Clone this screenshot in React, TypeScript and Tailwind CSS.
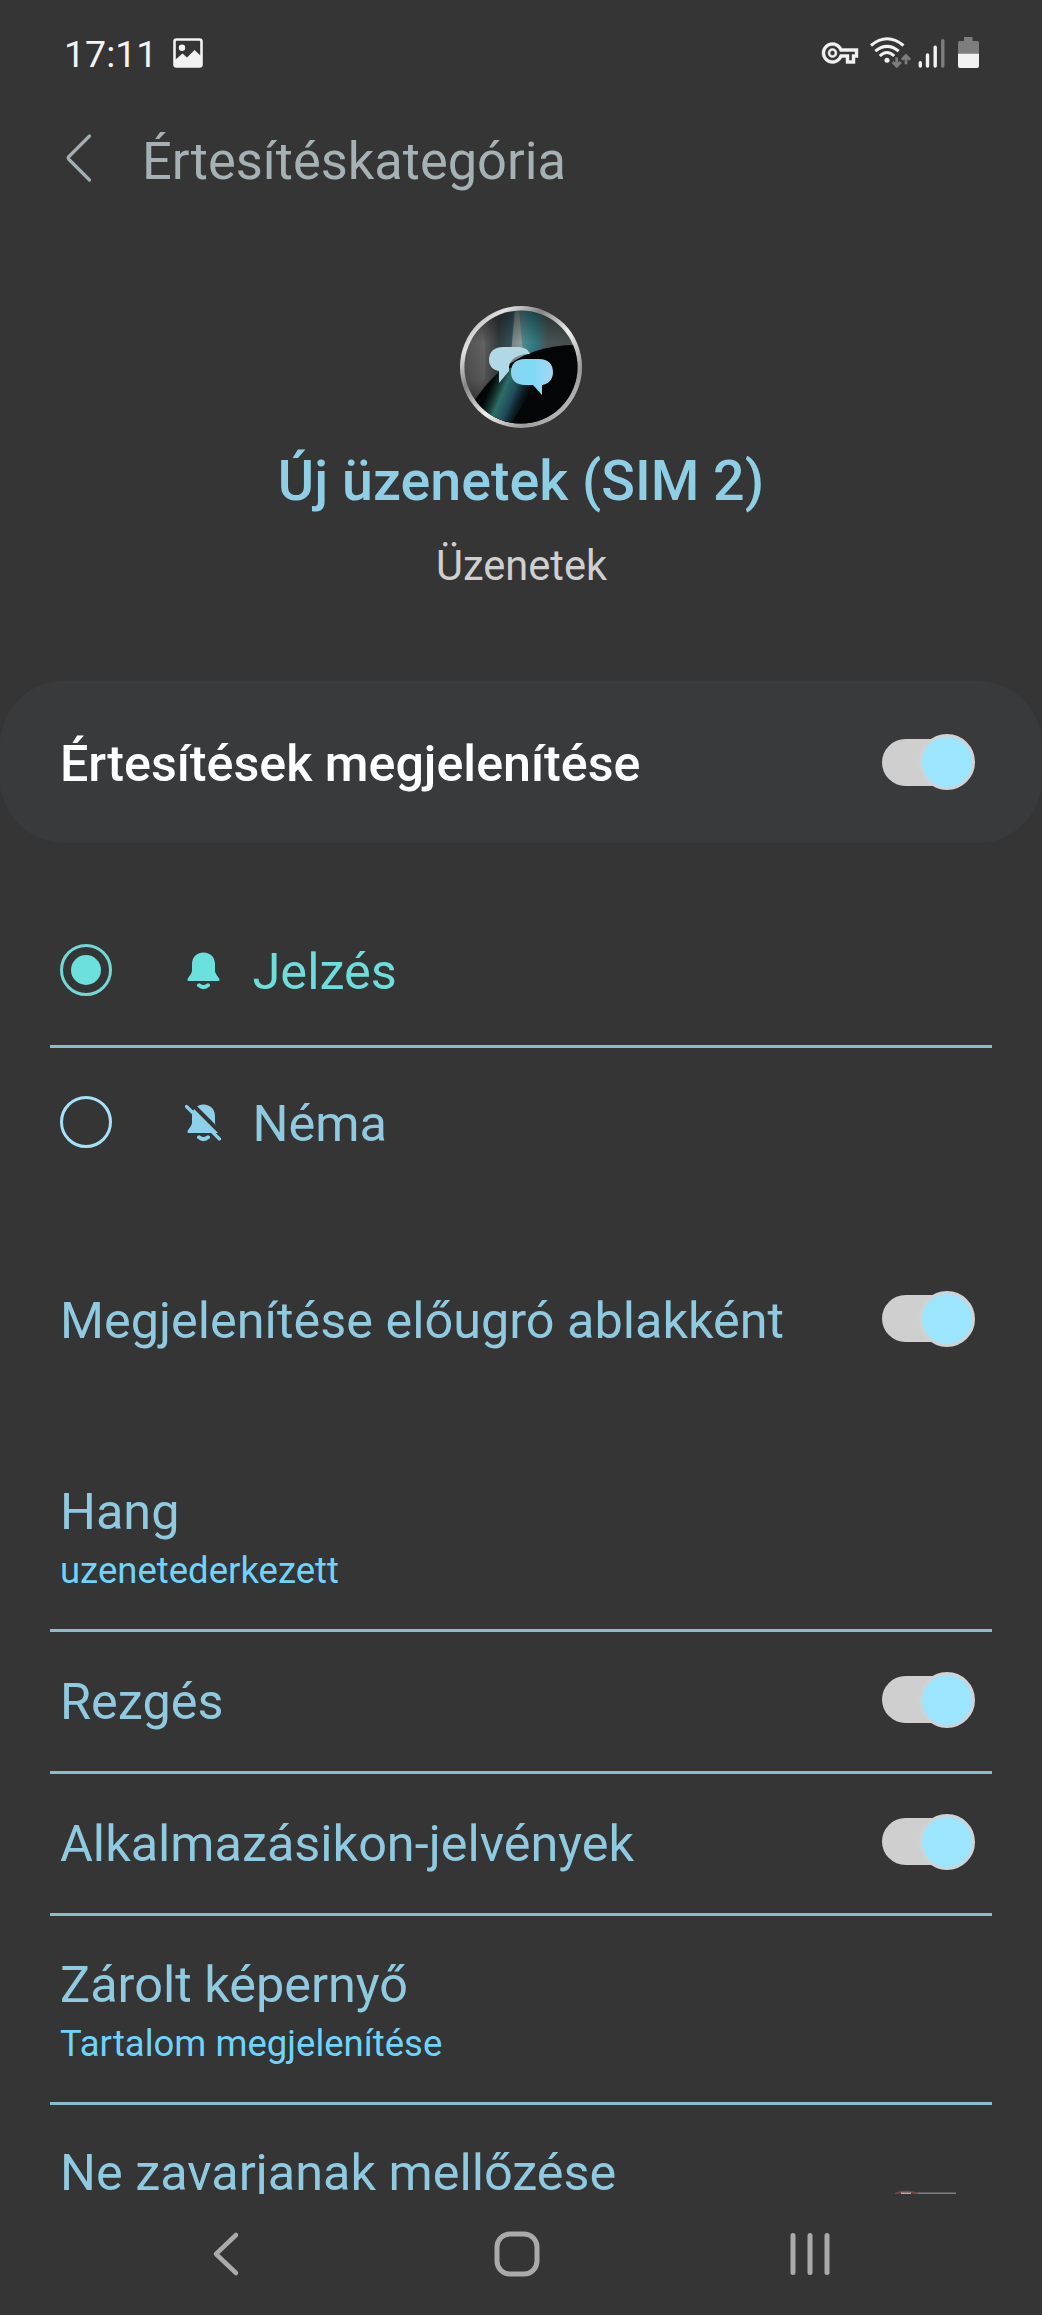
import clsx from "clsx"

interface ToggleProps {
  className?: string
}

function Toggle({ className }: ToggleProps) {
  return (
    <div className={clsx("flex h-14 w-[93px] shrink-0 items-center", className)}>
      <div className="flex h-[47px] w-[82px] items-center rounded-full bg-[#cfcfcf]">
        <div className="ml-[37px] size-14 shrink-0 rounded-full border-[3px] border-[#cfd3d5] bg-[#9be5ff]" />
      </div>
    </div>
  )
}

function Radio({ checked }: { checked?: boolean }) {
  return (
    <div
      className={clsx(
        "flex size-[52px] items-center justify-center rounded-full border-[3px]",
        checked ? "border-[#72d8d6]" : "border-[#a5e2fa]",
      )}
    >
      {checked && <div className="size-[30px] rounded-full bg-[#6ce0dc]" />}
    </div>
  )
}

function Divider() {
  return <div className="mx-[50px] h-[3px] bg-[#8bbccb]" />
}

function ImageIcon() {
  return (
    <svg width="30" height="30" viewBox="0 0 30 30" fill="none">
      <rect x="1.5" y="1.5" width="27" height="27" rx="2" stroke="#f2f2f2" strokeWidth="2.6" />
      <circle cx="9" cy="9.8" r="3.2" fill="#f2f2f2" />
      <path d="M2 22l7.5-6.5 4.5 4 7.5-7.5 7 6.5V28H2z" fill="#f2f2f2" />
    </svg>
  )
}

function StatusIcons() {
  return (
    <svg width="162" height="36" viewBox="0 0 162 36" fill="none">
      {/* VPN key */}
      <path
        transform="translate(3 -1) scale(1.5)"
        d="M22 19h-6v-4h-2.680c-1.140 2.420-3.600 4-6.320 4-3.860 0-7-3.140-7-7s3.140-7 7-7c2.720 0 5.170 1.580 6.320 4H24v6h-2v4zm-4-2h2v-4h2v-2H11.940l-.230-.670C11.010 8.340 9.110 7 7 7c-2.760 0-5 2.240-5 5s2.240 5 5 5c2.110 0 4.010-1.340 4.710-3.330l.230-.670H18v4zM7 15c-1.650 0-3-1.350-3-3s1.350-3 3-3 3 1.350 3 3-1.350 3-3 3zm0-4.600c-.900 0-1.600.700-1.600 1.600s.700 1.600 1.600 1.600 1.600-.700 1.600-1.600-.700-1.600-1.600-1.600z"
        fill="#f2f2f2"
        stroke="#f2f2f2"
        strokeWidth=".3"
      />
      {/* wifi */}
      <g stroke="#f2f2f2" strokeWidth="3">
        <path d="M52 9.500Q68 -4 84.500 9.500" />
        <path d="M56.300 15.200Q68 5.500 79.700 15.200" />
        <path d="M60.800 20Q68 13 75.200 20" />
      </g>
      <circle cx="68" cy="24.300" r="2.500" fill="#f2f2f2" />
      <g stroke="#7d7d7d" strokeWidth="2.800">
        <path d="M77.700 21.500V30M73.700 26l4 4.300 4-4.300" />
        <path d="M87 28.300V20M83 23.800l4-4.300 4 4.300" />
      </g>
      {/* signal */}
      <g strokeWidth="3.400" strokeLinecap="round" stroke="#f2f2f2">
        <path d="M101.300 26.700V30M108.500 19V30M116.200 11.300V30" />
        <path d="M123.800 4.700V30" stroke="#7d7d7d" />
      </g>
      {/* battery */}
      <path d="M145 1h8.500v4h5a1.500 1.500 0 0 1 1.500 1.500V18h-21V6.500a1.500 1.500 0 0 1 1.500-1.500h4.500z" fill="#7d7d7d" />
      <path d="M139 17.700h21v12.300a2 2 0 0 1-2 2h-17a2 2 0 0 1-2-2z" fill="#f2f2f2" />
    </svg>
  )
}

function BellIcon({ muted }: { muted?: boolean }) {
  return (
    <svg width="38" height="40" viewBox="0 0 38 40" fill="none">
      <path
        d="M18.500 2.500C11.500 2.500 7 7.500 7 14V20.500C7 24 3.500 26.500 2.500 29.500C2.300 30.500 3 31 4 31H33C34 31 34.700 30.500 34.500 29.500C33.500 26.500 30 24 30 20.500V14C30 7.500 25.500 2.500 18.500 2.500Z"
        fill="currentColor"
      />
      <path d="M14 35.300Q18.500 39 23 35.300" stroke="currentColor" strokeWidth="4" strokeLinecap="round" />
      {muted && (
        <>
          <path d="M5 0L38 33" stroke="#353535" strokeWidth="4" />
          <path d="M1.500 4.500L34.500 37" stroke="currentColor" strokeWidth="3.200" strokeLinecap="round" />
        </>
      )}
    </svg>
  )
}

function AppIcon() {
  return (
    <svg width="122" height="122" viewBox="0 0 122 122">
      <defs>
        <linearGradient id="rim" x1="0" y1="0" x2="1" y2="1">
          <stop offset="0" stopColor="#8b8b8b" />
          <stop offset=".2" stopColor="#e2e2e2" />
          <stop offset=".35" stopColor="#858585" />
          <stop offset=".55" stopColor="#f0f0f0" />
          <stop offset=".75" stopColor="#9a9a9a" />
          <stop offset="1" stopColor="#dddddd" />
        </linearGradient>
        <linearGradient id="sheen" x1="0" y1="0" x2="1" y2="0">
          <stop offset="0" stopColor="#3c3c3c" />
          <stop offset=".2" stopColor="#5a5a5a" />
          <stop offset=".32" stopColor="#333b3d" />
          <stop offset=".42" stopColor="#34525c" />
          <stop offset=".5" stopColor="#5a8890" />
          <stop offset=".6" stopColor="#2f7c84" />
          <stop offset=".72" stopColor="#465355" />
          <stop offset="1" stopColor="#4a4a4a" />
        </linearGradient>
        <linearGradient id="shade" x1="0" y1="0" x2="0" y2="1">
          <stop offset="0" stopColor="#000" stopOpacity=".5" />
          <stop offset=".3" stopColor="#000" stopOpacity="0" />
          <stop offset=".6" stopColor="#000" stopOpacity=".1" />
          <stop offset="1" stopColor="#000" stopOpacity=".8" />
        </linearGradient>
        <linearGradient id="beam" x1="28" y1="84" x2="66" y2="100" gradientUnits="userSpaceOnUse">
          <stop offset="0" stopColor="#1f5a50" stopOpacity="0" />
          <stop offset=".35" stopColor="#357f78" stopOpacity=".85" />
          <stop offset=".6" stopColor="#2c6c80" stopOpacity=".7" />
          <stop offset="1" stopColor="#14323f" stopOpacity="0" />
        </linearGradient>
        <linearGradient id="bubble" x1="0" y1="0" x2="1" y2="0">
          <stop offset="0" stopColor="#90d2ee" />
          <stop offset=".45" stopColor="#7bdcf6" />
          <stop offset="1" stopColor="#a3d6f2" />
        </linearGradient>
        <clipPath id="disc">
          <circle cx="61" cy="61" r="56.500" />
        </clipPath>
      </defs>
      <circle cx="61" cy="61" r="61" fill="url(#rim)" />
      <g clipPath="url(#disc)">
        <rect width="122" height="122" fill="url(#sheen)" />
        <path d="M20 14Q31 50 20 100L4 90V30Z" fill="#777" opacity=".3" />
        <path d="M55 4H59L64 60H50Z" fill="#a9a6a0" opacity=".6" />
        <rect width="122" height="122" fill="url(#shade)" />
        <path d="M12 98C34 66 62 37 122 39V122H20Z" fill="#030506" />
        <path d="M36 62H86L52 116L14 110Z" fill="url(#beam)" />
      </g>
      <path
        d="M43 41H57C64 41 68 43 70 48C59 48 50 52 49 61L49 65L39 77V65C33 64 29 60 29 54C29 46 34 41 43 41Z"
        fill="#b3d8e5"
      />
      <path
        d="M65 53H79C88 53 93 58 93 66C93 73 89 78 82 79V89L73 79H65C56 79 51 74 51 66C51 58 56 53 65 53Z"
        fill="url(#bubble)"
      />
    </svg>
  )
}

interface RowProps {
  title: string
  subtitle?: string
  toggle?: boolean
}

function SettingRow({ title, subtitle, toggle }: RowProps) {
  if (subtitle) {
    return (
      <div className="h-[186px] px-[60px] pt-[39px]">
        <div className="text-[50.4px] leading-[60px] text-[#8fcae0]">{title}</div>
        <div className="text-[36.5px] leading-[57px] text-[#6fd4fb]">{subtitle}</div>
      </div>
    )
  }
  return (
    <div className="flex h-[139px] items-center justify-between pr-[67.5px] pl-[60px]">
      <span className="text-[50.4px] leading-[60px] text-[#8fcae0]">{title}</span>
      {toggle && <Toggle className="mb-1" />}
    </div>
  )
}

function NavBar() {
  return (
    <div className="flex h-[121px] items-center justify-between pr-[211px] pb-[2px] pl-[212px]">
      <svg width="28" height="46" viewBox="0 0 28 46" fill="none">
        <path d="M24 4L4 23L24 42" stroke="#aaa" strokeWidth="4.500" strokeLinecap="round" strokeLinejoin="round" />
      </svg>
      <svg width="46" height="46" viewBox="0 0 46 46" fill="none" className="ml-1">
        <rect x="3" y="3" width="40" height="40" rx="13" stroke="#aaa" strokeWidth="5" />
      </svg>
      <svg width="42" height="46" viewBox="0 0 42 46">
        <path d="M4 4.500V41.500M21 4.500V41.500M38 4.500V41.500" stroke="#aaa" strokeWidth="5" strokeLinecap="round" />
      </svg>
    </div>
  )
}

export default function App() {
  return (
    <div className="flex h-[2315px] w-[1042px] flex-col overflow-hidden bg-[#353535] font-[Roboto,sans-serif]">
      {/* Status bar */}
      <div className="flex h-[108px] items-center justify-between pr-[61px] pl-16">
        <div className="flex items-center pt-[2px]">
          <span className="w-[109px] text-[37.5px] leading-none text-[#f4f4f4]">17:11</span>
          <div className="-mt-1">
            <ImageIcon />
          </div>
        </div>
        <StatusIcons />
      </div>

      {/* App bar */}
      <div className="flex h-[106px] items-center pl-[65px]">
        <svg width="28" height="50" viewBox="0 0 28 50" fill="none" className="-mt-1.5">
          <path d="M24.500 3L4 23.500Q2.500 25 4 26.500L24.500 47" stroke="#a3afb3" strokeWidth="3.200" strokeLinecap="round" />
        </svg>
        <h1 className="ml-[49px] text-[52.4px] leading-[64px] text-[#a6b1b5]">Értesítéskategória</h1>
      </div>

      {/* Category header */}
      <div className="flex h-[467px] flex-col items-center pt-[92px]">
        <AppIcon />
        <h2 className="mt-[17px] text-[55.6px] leading-[72px] font-medium text-[#8fcfe6]">Új üzenetek (SIM 2)</h2>
        <p className="mt-[24px] pl-px text-[41.600px] leading-[50px] text-[#cfcfcf]">Üzenetek</p>
      </div>

      <div className="flex h-[162px] items-center justify-between rounded-[64px] bg-[#393a3c] pr-[67.5px] pl-[60px]">
        <span className="pt-1 text-[50.2px] leading-[60px] font-medium text-white">Értesítések megjelenítése</span>
        <Toggle />
      </div>

      {/* Alert type */}
      <div className="mt-[51px]">
        <div className="flex h-[151px] items-center pl-[59.5px]">
          <Radio checked />
          <div className="ml-[73px] text-[#6ce0dc]">
            <BellIcon />
          </div>
          <span className="ml-[30px] pt-1 text-[50.5px] leading-[60px] text-[#6cdfdd]">Jelzés</span>
        </div>
        <Divider />
        <div className="flex h-[147px] items-center pl-[59.5px]">
          <Radio />
          <div className="ml-[73px] text-[#8dd0ea]">
            <BellIcon muted />
          </div>
          <span className="ml-[30px] pt-1 text-[50.5px] leading-[60px] text-[#8fcae0]">Néma</span>
        </div>
      </div>

      <div className="mt-[56px]">
        <SettingRow title="Megjelenítése előugró ablakként" toggle />
      </div>

      {/* Clipped by the navigation bar */}
      <div className="mt-[53px] h-[751px] shrink-0 overflow-hidden">
        <SettingRow title="Hang" subtitle="uzenetederkezett" />
        <Divider />
        <SettingRow title="Rezgés" toggle />
        <Divider />
        <SettingRow title="Alkalmazásikon-jelvények" toggle />
        <Divider />
        <SettingRow title="Zárolt képernyő" subtitle="Tartalom megjelenítése" />
        <Divider />
        <div className="flex justify-between pt-[38px] pr-[83px] pl-[60px]">
          <span className="text-[50.4px] leading-[60px] text-[#8fcae0]">Ne zavarjanak mellőzése</span>
          <svg width="66" height="56" viewBox="0 0 66 56" fill="none" className="mt-[45px]">
            <path d="M22 5.500H63" stroke="#7e8187" strokeWidth="2" />
            <path d="M2 6Q12 1 25 6" stroke="#7d4644" strokeWidth="2" />
            <path d="M8 5.500H18" stroke="#b5adad" strokeWidth="2" />
          </svg>
        </div>
      </div>

      <NavBar />
    </div>
  )
}
